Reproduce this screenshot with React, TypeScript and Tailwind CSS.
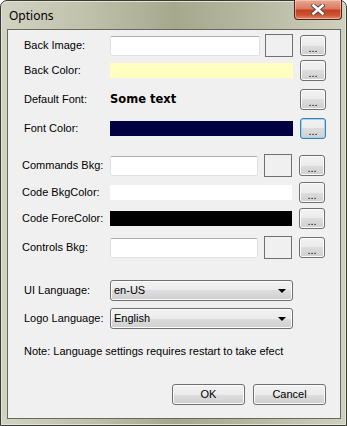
const btn =
  'flex items-center justify-center border border-[#707070] rounded-[3px] bg-[linear-gradient(#f2f2f2_0%,#ebebeb_50%,#dddddd_50%,#cfcfcf_100%)] shadow-[inset_0_0_0_1px_#fbfbfb]'

const focusBtn =
  'flex items-center justify-center border border-[#3c7fb1] rounded-[3px] bg-[linear-gradient(#f2f2f2_0%,#ebebeb_50%,#dddddd_50%,#cfcfcf_100%)] shadow-[inset_0_0_0_1px_#9fd5f4]'

const textbox = 'h-[20px] bg-white border border-[#dde1e6] border-t-[#abadb3] rounded-[2px]'

function Dots({ focused }: { focused?: boolean }) {
  return (
    <div className={(focused ? focusBtn : btn) + ' w-[26px] h-[21px] ml-[7px] shrink-0'}>
      <span className="text-[11px] leading-none mt-[5px] text-black">...</span>
    </div>
  )
}

function Swatch({ ml }: { ml: string }) {
  return <div className={'w-[28px] h-[23px] border border-[#707070] bg-[#f0f0f0] shrink-0 ' + ml} />
}

function Row({
  label,
  labelW,
  className,
  children,
}: {
  label: string
  labelW: string
  className: string
  children: React.ReactNode
}) {
  return (
    <div className={'flex items-center h-[23px] ' + className}>
      <span className={'shrink-0 ' + labelW}>{label}</span>
      {children}
    </div>
  )
}

function Combo({ label, value, className }: { label: string; value: string; className: string }) {
  return (
    <div className={'flex items-center h-[21px] ' + className}>
      <span className="w-[86px] shrink-0">{label}</span>
      <div className={btn + ' w-[183px] h-[21px] !justify-between pl-[3px] pr-[6px]'}>
        <span>{value}</span>
        <svg width="8" height="4" viewBox="0 0 8 4">
          <path d="M0 0H8L4 4Z" fill="#000" />
        </svg>
      </div>
    </div>
  )
}

export default function App() {
  return (
    <div className="w-[347px] h-[426px] flex flex-col pl-[6px] pr-[5px] pb-[6px] border border-[#3a3b32] rounded-t-[7px] bg-[linear-gradient(90deg,#d2d4c3_0%,#bfc1ab_25%,#a6a88e_50%,#b3b59d_70%,#cfd1bf_100%)] shadow-[inset_0_0_0_1px_#e3e4d8] font-['Liberation_Sans',Arial,sans-serif] text-[11px] text-black">
      <div className="h-[28px] flex items-start justify-between shrink-0">
        <span className="ml-[2px] mt-[6px] text-[12px] font-['Noto_Sans',sans-serif] text-black">Options</span>
        <div className="-mt-px -mr-px w-[48px] h-[20px] flex items-center justify-center border border-[#4e2318] border-t-0 rounded-b-[4px] bg-[linear-gradient(#e9a896_0%,#dc7a60_45%,#c4401f_55%,#cf5434_80%,#e28a6c_100%)] shadow-[inset_0_0_0_1px_rgba(255,220,200,0.5)]">
          <svg width="14" height="11" viewBox="0 0 14 11">
            <path d="M2.5 1.5L11.5 9.5M11.5 1.5L2.5 9.5" stroke="#4a4a4a" strokeWidth="4.4" strokeLinecap="square" />
            <path d="M2.5 1.5L11.5 9.5M11.5 1.5L2.5 9.5" stroke="#fff" strokeWidth="2.6" strokeLinecap="square" />
          </svg>
        </div>
      </div>

      <div className="flex-1 flex flex-col border border-[#676a5a] bg-[#f0f0f0] pt-[4px]">
        <div className="flex flex-col pl-[16px]">
          <Row label="Back Image:" labelW="w-[86px]" className="">
            <div className={textbox + ' w-[150px]'} />
            <Swatch ml="ml-[5px]" />
            <Dots />
          </Row>
          <Row label="Back Color:" labelW="w-[86px]" className="mt-[2px]">
            <div className="w-[183px] h-[15px] bg-[#ffffc0]" />
            <Dots />
          </Row>
          <Row label="Default Font:" labelW="w-[86px]" className="mt-[6px]">
            <span className="w-[183px] font-['DejaVu_Sans',sans-serif] font-bold text-[11.5px]">Some text</span>
            <Dots />
          </Row>
          <Row label="Font Color:" labelW="w-[86px]" className="mt-[6px]">
            <div className="w-[183px] h-[15px] bg-[#000040]" />
            <Dots focused />
          </Row>
        </div>

        <div className="flex flex-col pl-[14px]">
          <Row label="Commands Bkg:" labelW="w-[88px]" className="mt-[14px]">
            <div className={textbox + ' w-[148px]'} />
            <Swatch ml="ml-[6px]" />
            <Dots />
          </Row>
          <Row label="Code BkgColor:" labelW="w-[88px]" className="mt-[4px]">
            <div className="w-[182px] h-[15px] bg-white" />
            <Dots />
          </Row>
          <Row label="Code ForeColor:" labelW="w-[88px]" className="mt-[3px]">
            <div className="w-[182px] h-[15px] bg-black" />
            <Dots />
          </Row>
          <Row label="Controls Bkg:" labelW="w-[88px]" className="mt-[6px]">
            <div className={textbox + ' w-[148px]'} />
            <Swatch ml="ml-[6px]" />
            <Dots />
          </Row>
        </div>

        <div className="flex flex-col pl-[16px]">
          <Combo label="UI Language:" value="en-US" className="mt-[21px]" />
          <Combo label="Logo Language:" value="English" className="mt-[7px]" />
          <p className="mt-[15px] h-[14px] leading-[14px]">Note: Language settings requires restart to take efect</p>
        </div>

        <div className="flex justify-end gap-[8px] pr-[14px] mt-[26px]">
          <div className={btn + ' w-[73px] h-[21px]'}>OK</div>
          <div className={btn + ' w-[73px] h-[21px]'}>Cancel</div>
        </div>
      </div>
    </div>
  )
}
